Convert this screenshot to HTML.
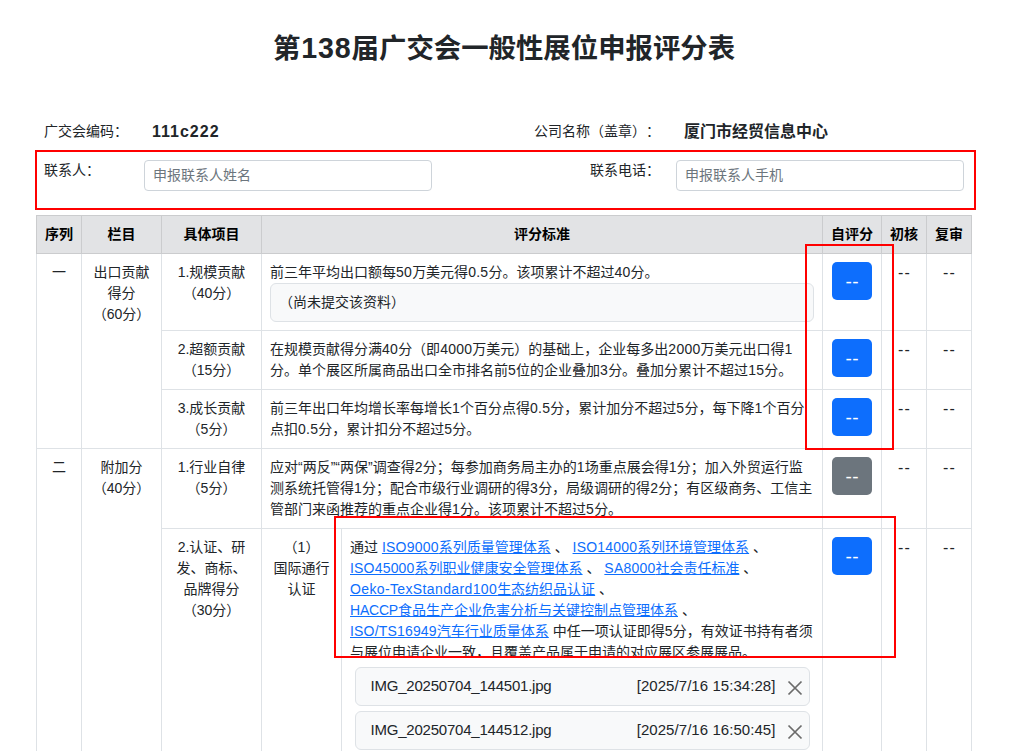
<!DOCTYPE html>
<html lang="zh-CN">
<head>
<meta charset="utf-8">
<title>第138届广交会一般性展位申报评分表</title>
<style>
*{box-sizing:border-box;}
html,body{margin:0;padding:0;background:#fff;}
body{width:1012px;height:751px;overflow:hidden;position:relative;
  font-family:"Liberation Sans","Noto Sans CJK SC",sans-serif;font-size:14px;line-height:21px;color:#212529;text-spacing-trim:space-all;}
.wrap{position:absolute;left:36px;top:0;width:936px;}
h3.title{position:absolute;left:0;top:29px;width:936px;margin:0;text-align:center;font-size:27.4px;line-height:40px;font-weight:700;color:#212529;white-space:nowrap;}
.tn{font-size:28.6px;letter-spacing:.9px;margin-left:.9px;line-height:1px;}
table{border-collapse:collapse;}
/* info table */
table.info{position:absolute;left:0;top:113px;width:936px;table-layout:fixed;}
table.info td{padding:8px;vertical-align:top;}
table.info td.lb{font-size:14px;line-height:21px;white-space:nowrap;}
table.info td.r{text-align:right;}
.plain{font-size:16px;line-height:24px;font-weight:700;padding:0 8px;height:24px;white-space:nowrap;margin-top:-1px;}
.plain.n{letter-spacing:1px;}
.inp{height:31px;border:1px solid #ced4da;border-radius:4px;background:#fff;padding:4px 8px;font-size:14px;line-height:21px;color:#6c757d;white-space:nowrap;}
tr.r1 td{height:39px;}
tr.r2 td{height:56px;}
tr.r2 td .inp{margin-top:0;}
/* main table */
table.main{position:absolute;left:0;top:215px;width:935px;table-layout:fixed;border:1px solid #dee2e6;}
table.main th,table.main td{border:1px solid #dee2e6;padding:8px;vertical-align:top;font-size:14px;line-height:21px;}
table.main th{border-color:#cbccce;background:#e2e3e5;font-weight:700;text-align:center;color:#000;white-space:nowrap;padding-left:0;padding-right:0;}
td.c{text-align:center;}
td.t{white-space:nowrap;}
i{font-style:normal;letter-spacing:.27px;}
.note{height:39px;border:1px solid #dee2e6;border-radius:6px;background:#f8f9fa;padding:8px;line-height:21px;}
.btn{display:block;width:40px;height:38px;margin:0 auto;border-radius:5px;color:#fff;font-size:19px;line-height:40px;text-align:center;letter-spacing:.3px;text-indent:.3px;}
.bp{background:#0d6efd;}
.bs{background:#6c757d;}
td.b{padding:8px 0 0 0 !important;}
a{color:#0d6efd;text-decoration:underline;}
.clip{height:120px;overflow:hidden;white-space:nowrap;}
.file{position:relative;height:39px;margin:0 4.5px 5px 4.5px;border:1px solid #dee2e6;border-radius:6px;background:#f8f9fa;font-size:15px;line-height:22px;padding:7px 0 0 15px;white-space:nowrap;letter-spacing:-.22px;}
.file .ts{position:absolute;right:33px;top:7px;letter-spacing:.06px;}
.file svg{position:absolute;right:6px;top:12px;}
.red{position:absolute;border:2px solid #ff0000;pointer-events:none;}
table.main td.dd{font-size:16px;letter-spacing:1.2px;text-indent:1.2px;}
</style>
</head>
<body>
<div class="wrap">
  <h3 class="title">第<span class="tn">138</span>届广交会一般性展位申报评分表</h3>

  <table class="info">
    <colgroup><col style="width:100px"><col style="width:304px"><col style="width:228px"><col style="width:304px"></colgroup>
    <tr class="r1">
      <td class="lb">广交会编码：</td>
      <td><div class="plain n">111c222</div></td>
      <td class="lb r">公司名称（盖章）：</td>
      <td><div class="plain">厦门市经贸信息中心</div></td>
    </tr>
    <tr class="r2">
      <td class="lb">联系人：</td>
      <td><div class="inp">申报联系人姓名</div></td>
      <td class="lb r">联系电话：</td>
      <td><div class="inp">申报联系人手机</div></td>
    </tr>
  </table>

  <table class="main">
    <colgroup><col style="width:45px"><col style="width:80px"><col style="width:100px"><col style="width:80px"><col style="width:481px"><col style="width:59px"><col style="width:45px"><col style="width:45px"></colgroup>
    <thead>
      <tr style="height:38px">
        <th>序列</th><th>栏目</th><th>具体项目</th><th colspan="2">评分标准</th><th>自评分</th><th>初核</th><th>复审</th>
      </tr>
    </thead>
    <tbody>
      <tr style="height:77px">
        <td class="c" rowspan="3">一</td>
        <td class="c" rowspan="3">出口贡献<br>得分<br>（60分）</td>
        <td class="c">1.规模贡献<br>（40分）</td>
        <td class="t" colspan="2">前三年平均出口额每<i>50</i>万美元得<i>0.5</i>分。该项累计不超过<i>40</i>分。
          <div class="note">（尚未提交该资料）</div></td>
        <td class="b"><div class="btn bp">--</div></td>
        <td class="c dd">--</td><td class="c dd">--</td>
      </tr>
      <tr style="height:59px">
        <td class="c">2.超额贡献<br>（15分）</td>
        <td class="t" colspan="2">在规模贡献得分满<i>40</i>分（即<i>4000</i>万美元）的基础上，企业每多出<i>2000</i>万美元出口得<i>1</i><br>分。单个展区所属商品出口全市排名前<i>5</i>位的企业叠加<i>3</i>分。叠加分累计不超过<i>15</i>分。</td>
        <td class="b"><div class="btn bp">--</div></td>
        <td class="c dd">--</td><td class="c dd">--</td>
      </tr>
      <tr style="height:59px">
        <td class="c">3.成长贡献<br>（5分）</td>
        <td class="t" colspan="2">前三年出口年均增长率每增长<i>1</i>个百分点得<i>0.5</i>分，累计加分不超过<i>5</i>分，每下降<i>1</i>个百分<br>点扣<i>0.5</i>分，累计扣分不超过<i>5</i>分。</td>
        <td class="b"><div class="btn bp">--</div></td>
        <td class="c dd">--</td><td class="c dd">--</td>
      </tr>
      <tr style="height:80px">
        <td class="c" rowspan="2">二</td>
        <td class="c" rowspan="2">附加分<br>（40分）</td>
        <td class="c">1.行业自律<br>（5分）</td>
        <td class="t" colspan="2">应对“两反”“两保”调查得<i>2</i>分；每参加商务局主办的<i>1</i>场重点展会得<i>1</i>分；加入外贸运行监<br>测系统托管得<i>1</i>分；配合市级行业调研的得<i>3</i>分，局级调研的得<i>2</i>分；有区级商务、工信主<br>管部门来函推荐的重点企业得<i>1</i>分。该项累计不超过<i>5</i>分。</td>
        <td class="b"><div class="btn bs">--</div></td>
        <td class="c dd">--</td><td class="c dd">--</td>
      </tr>
      <tr style="height:240px">
        <td class="c">2.认证、研<br>发、商标、<br>品牌得分<br>（30分）</td>
        <td class="c">（1）<br>国际通行<br>认证</td>
        <td>
          <div class="clip">通过 <a><span style="letter-spacing:.23px">ISO9000</span>系列质量管理体系</a> 、 <a><span style="letter-spacing:.19px">ISO14000</span>系列环境管理体系</a> 、<br><a><span style="letter-spacing:.19px">ISO45000</span>系列职业健康安全管理体系</a> 、 <a><span style="letter-spacing:.2px">SA8000</span>社会责任标准</a> 、<br><a><span style="letter-spacing:.37px">Oeko-TexStandard100</span>生态纺织品认证</a> 、<br><a><span style="letter-spacing:-.2px">HACCP</span>食品生产企业危害分析与关键控制点管理体系</a> 、<br><a><span style="letter-spacing:.18px">ISO/TS16949</span>汽车行业质量体系</a> 中任一项认证即得<i>5</i>分，有效证书持有者须<br>与展位申请企业一致，且覆盖产品属于申请的对应展区参展展品。</div>
          <div style="height:10px"></div>
          <div class="file">IMG_20250704_144501.jpg<span class="ts">[2025/7/16 15:34:28]</span><svg width="16" height="16" viewBox="0 0 16 16"><path d="M1.5 1.5L14.5 14.5M14.5 1.5L1.5 14.5" stroke="#6b6b6b" stroke-width="1.75" fill="none"/></svg></div>
          <div class="file">IMG_20250704_144512.jpg<span class="ts">[2025/7/16 16:50:45]</span><svg width="16" height="16" viewBox="0 0 16 16"><path d="M1.5 1.5L14.5 14.5M14.5 1.5L1.5 14.5" stroke="#6b6b6b" stroke-width="1.75" fill="none"/></svg></div>
        </td>
        <td class="b"><div class="btn bp">--</div></td>
        <td class="c dd">--</td><td class="c dd">--</td>
      </tr>
    </tbody>
  </table>
</div>

<div class="red" style="left:35px;top:150px;width:941px;height:60px;"></div>
<div class="red" style="left:804.5px;top:244px;width:89.5px;height:206px;"></div>
<div class="red" style="left:334.3px;top:516px;width:562px;height:141.7px;"></div>
</body>
</html>
